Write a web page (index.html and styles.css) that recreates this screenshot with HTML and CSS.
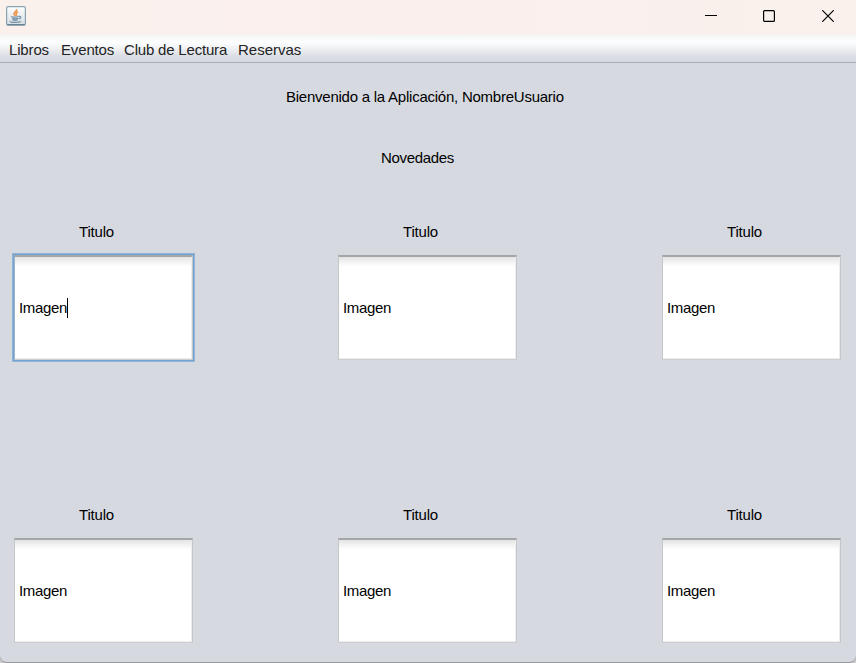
FILE: index.html
```
<!DOCTYPE html>
<html lang="es">
<head>
<meta charset="utf-8">
<title>Biblioteca</title>
<link rel="stylesheet" href="styles.css">
</head>
<body>
<div class="window">
  <header class="titlebar">
    <svg class="app-icon" width="20" height="20" viewBox="0 0 20 20">
      <defs><linearGradient id="tile" x1="0" y1="0" x2="0" y2="1"><stop offset="0" stop-color="#fdfefe"/><stop offset="1" stop-color="#d5dde3"/></linearGradient></defs>
      <rect x=".6" y=".6" width="18.8" height="18.4" rx="1.6" fill="url(#tile)" stroke="#8ba2b3" stroke-width="1.2"/>
      <path d="M1.2 18.8h17.6" stroke="#587388" stroke-width="1.2"/>
      <path d="M10.6 3.2c1 2-3.2 2.700-2.600 4.800.2.800 1 1.300 1.600 2M12 5.800c-1.400.8-2.300 1.600-1.700 2.600.4.600.4 1-.2 1.500" fill="none" stroke="#ef9950" stroke-width="1.700"/>
      <path d="M5.200 10.500c2 .7 5.600.7 7.600 0M6 12.400c2 .6 4.500.6 6.300 0M6.400 14c1.700.5 3.700.5 5.300 0M13 10.400c2.300-.5 2.200 1.900-.2 2.600M4.400 15.200c-1.800 1.500 8.500 1.600 10.600.3" fill="none" stroke="#7592a8" stroke-width="1.300"/>
    </svg>
    <div class="controls">
      <svg width="12" height="12" viewBox="0 0 12 12"><path d="M0 5.500h12" stroke="#000"/></svg>
      <svg width="12" height="12" viewBox="0 0 12 12"><rect x=".6" y=".6" width="10.800" height="10.800" rx="1" fill="none" stroke="#000" stroke-width="1.200"/></svg>
      <svg width="12" height="12" viewBox="0 0 12 12"><path d="M.3.3l11.400 11.400M11.700.3L.3 11.700" stroke="#000" stroke-width="1.200"/></svg>
    </div>
  </header>
  <nav class="menubar"><span class="libros">Libros</span><span class="eventos">Eventos</span><span class="club">Club de Lectura</span><span>Reservas</span></nav>
  <main>
    <p class="welcome">Bienvenido a la Aplicación, NombreUsuario</p>
    <p class="news">Novedades</p>
    <div class="grid">
      <section><h2>Titulo</h2><div class="field focused">Imagen<i class="caret"></i></div></section>
      <section><h2>Titulo</h2><div class="field">Imagen</div></section>
      <section><h2>Titulo</h2><div class="field">Imagen</div></section>
      <section><h2>Titulo</h2><div class="field">Imagen</div></section>
      <section><h2>Titulo</h2><div class="field">Imagen</div></section>
      <section><h2>Titulo</h2><div class="field">Imagen</div></section>
    </div>
  </main>
</div>
</body>
</html>
```
FILE: styles.css
```
* { box-sizing: border-box; }
body { margin: 0; background: #c8c8ca; font: 15px/18px "Liberation Sans", Arial, sans-serif; color: #000; }
.window { width: 856px; height: 663px; overflow: hidden; background: #d6d9e0; border-bottom: 1px solid #98999e; border-radius: 0 0 7px 7px; }
.titlebar { height: 35px; padding: 6px 22px 0 6px; display: flex; justify-content: space-between; background: linear-gradient(90deg, #faf1ec, #faefed 50%, #f9f1ec); }
.controls { display: flex; gap: 46px 46px; padding-top: 4px; }
.controls svg:last-child { margin-left: 1px; }
svg { display: block; }
.menubar { height: 28px; padding: 6px 9px 0; display: flex; color: #232323; white-space: nowrap; background: linear-gradient(#f4f6f6 0, #fdfefe 25%, #f7f8f9 38%, #d8dce3 82%, #d6d9e0); border-bottom: 1px solid #a7abb6; }
.libros { width: 52px; letter-spacing: -.15px; }
.eventos { width: 63px; letter-spacing: -.15px; }
.club { width: 114px; letter-spacing: -.19px; }
p, h2 { margin: 0; font-size: 15px; font-weight: 400; line-height: 18px; white-space: nowrap; }
.welcome { padding: 25px 0 0 286px; letter-spacing: -.24px; }
.news { padding: 43px 0 0 381px; letter-spacing: -.33px; }
.grid { display: grid; grid-template-columns: repeat(3, 179px); column-gap: 145px; grid-auto-rows: 137px; row-gap: 146px; padding: 56px 0 0 14px; }
h2 { padding-left: 65px; letter-spacing: -.2px; }
.field { height: 105px; margin-top: 14px; padding: 0 0 1px 4px; display: flex; align-items: center; letter-spacing: -.33px; background: linear-gradient(#e3e3e3, #f3f3f3 5px, #fff 10px); border: 1px solid #c6c7ca; border-top: 2px solid #a5a6a9; border-bottom-color: #cdced1; box-shadow: inset -1px -1px #ededed; }
.focused { border-left-color: #9fb4c9; box-shadow: inset -1px -1px #ededed, 0 0 0 1px #73a4d1, 0 0 0 2px #8fb4d7; }
.caret { width: 1px; height: 20px; background: #000; }
```
